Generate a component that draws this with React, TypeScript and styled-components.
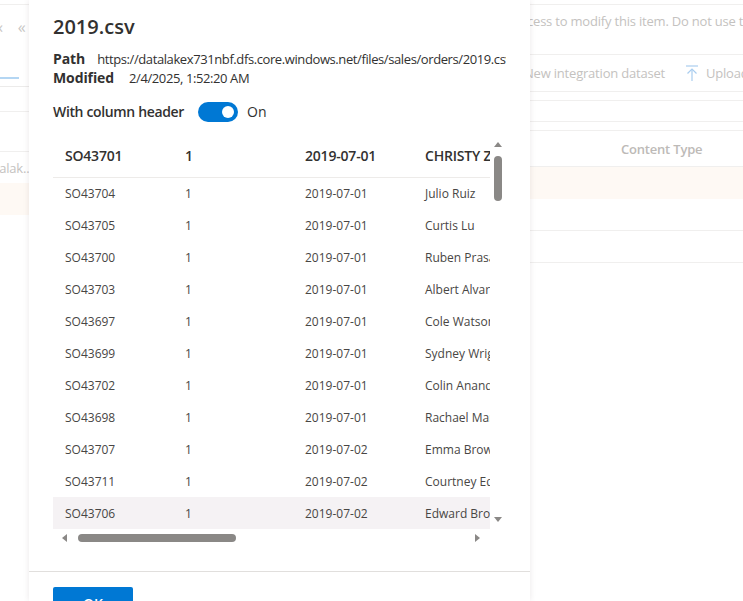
import React from 'react';
import styled, { createGlobalStyle } from 'styled-components';

const GlobalStyle = createGlobalStyle`
  html, body {
    margin: 0;
    padding: 0;
    background: #ffffff;
  }
  body {
    font-family: 'Segoe UI', 'Open Sans', 'Noto Sans', sans-serif;
    color: #323130;
  }
`;

const Page = styled.div`
  position: relative;
  width: 743px;
  height: 601px;
  overflow: hidden;
  background: #ffffff;
`;

/* ---------- faded studio page behind the panel ---------- */

const Backdrop = styled.div`
  display: flex;
  height: 100%;
  color: #c4c2c0;
  font-size: 13px;
  letter-spacing: -0.2px;
`;

const LeftPane = styled.div`
  width: 120px;
  display: flex;
  flex-direction: column;
  flex-shrink: 0;
`;

const MainPane = styled.div`
  flex: 1;
  display: flex;
  flex-direction: column;
  padding-left: 407px;
`;

const Strip = styled.div<{ $h: number; $line?: boolean; $bg?: string; $top?: number }>`
  height: ${(p) => p.$h}px;
  padding-top: ${(p) => p.$top || 0}px;
  border-bottom: ${(p) => (p.$line ? '1px solid #f0efee' : 'none')};
  background: ${(p) => p.$bg || 'transparent'};
  display: flex;
  align-items: ${(p) => (p.$top ? 'flex-start' : 'center')};
  white-space: nowrap;
  overflow: hidden;
  flex-shrink: 0;
`;

const NavGlyphs = styled.div`
  display: flex;
  margin-left: -10px;
  font-size: 16px;
  color: #c8c6c4;
`;

const Glyph = styled.span`
  width: 21px;
  text-align: center;
`;

const TabStrip = styled.div`
  height: 37px;
  border-bottom: 1px solid #ecebea;
  display: flex;
  align-items: flex-end;
  flex-shrink: 0;
`;

const TabMark = styled.div`
  width: 19px;
  height: 2px;
  margin-bottom: 7px;
  background: #b4d6f3;
`;

const FadedText = styled.span<{ $shift?: number }>`
  color: #c4c2c0;
  margin-left: ${(p) => p.$shift || 0}px;
`;

const Toolbar = styled.div`
  display: flex;
  align-items: center;
  gap: 21px;
  margin-left: -3px;
`;

const ToolItem = styled.span`
  display: inline-flex;
  align-items: center;
  gap: 8px;
`;

const ColHead = styled.div`
  padding-left: 94px;
  font-weight: 600;
  color: #bdbab7;
`;

/* ---------- the side panel ---------- */

const Panel = styled.aside`
  position: absolute;
  top: 0;
  left: 29px;
  width: 501px;
  height: 601px;
  background: #ffffff;
  box-shadow: 0 0 6px rgba(60, 30, 40, 0.1);
  display: flex;
  flex-direction: column;
  overflow: hidden;
`;

const PanelBody = styled.div`
  padding: 13px 24px 0;
  display: flex;
  flex-direction: column;
`;

const Title = styled.h2`
  margin: 0;
  font-size: 20px;
  line-height: 28px;
  font-weight: 600;
  color: #323130;
`;

const MetaList = styled.div`
  margin-top: 8px;
  display: flex;
  flex-direction: column;
`;

const MetaRow = styled.div`
  height: 19px;
  display: flex;
  align-items: baseline;
  font-size: 13px;
  letter-spacing: -0.4px;
  line-height: 19px;
  white-space: nowrap;
  overflow: hidden;
`;

const MetaLabel = styled.span<{ $gap: number }>`
  font-size: 14px;
  letter-spacing: -0.1px;
  font-weight: 700;
  margin-right: ${(p) => p.$gap}px;
`;

const ToggleRow = styled.div`
  margin-top: 15px;
  height: 20px;
  display: flex;
  align-items: center;
  font-size: 14px;
  line-height: 20px;
`;

const ToggleLabel = styled.span`
  font-weight: 600;
  letter-spacing: -0.35px;
  margin-right: 14px;
`;

const Track = styled.span<{ $on: boolean }>`
  width: 40px;
  height: 20px;
  box-sizing: border-box;
  border-radius: 10px;
  background: ${(p) => (p.$on ? '#0078d4' : '#ffffff')};
  display: inline-flex;
  align-items: center;
  justify-content: ${(p) => (p.$on ? 'flex-end' : 'flex-start')};
  padding: 0 4px;
  margin-right: 9px;
`;

const Knob = styled.span`
  width: 12px;
  height: 12px;
  border-radius: 50%;
  background: #ffffff;
`;

const TableArea = styled.div`
  margin-top: 15px;
  display: grid;
  grid-template-columns: 437px 16px;
  grid-template-rows: 392px 18px;
`;

const Viewport = styled.div`
  overflow: hidden;
`;

const Grid = styled.table`
  border-collapse: collapse;
  table-layout: fixed;
  width: 480px;
`;

const HeadCell = styled.th`
  width: 120px;
  box-sizing: border-box;
  height: 40px;
  padding: 0 0 3px 12px;
  text-align: left;
  font-size: 14px;
  font-weight: 600;
  letter-spacing: -0.2px;
  color: #323130;
  border-bottom: 1px solid #edebe9;
  white-space: nowrap;
  overflow: hidden;
`;

const Row = styled.tr<{ $hover?: boolean }>`
  height: 32px;
  background: ${(p) => (p.$hover ? '#f5f2f4' : 'transparent')};
`;

const Cell = styled.td`
  padding: 0 0 0 12px;
  font-size: 12px;
  color: #484644;
  white-space: nowrap;
  overflow: hidden;
`;

const VScroll = styled.div`
  display: flex;
  flex-direction: column;
  align-items: center;
  padding: 4px 0 6px;
  box-sizing: border-box;
`;

const HScroll = styled.div`
  display: flex;
  align-items: center;
  padding: 0 9px 0 8px;
`;

const Thumb = styled.div<{ $vertical?: boolean }>`
  background: #8a8886;
  border-radius: 4px;
  ${(p) => (p.$vertical ? 'width: 8px; height: 45px; margin-top: 8px;' : 'height: 8px; width: 158px; margin-left: 10px;')}
`;

const Filler = styled.div`
  flex: 1;
`;

const Footer = styled.div`
  margin-top: 24px;
  border-top: 1px solid #e1dfdd;
  padding: 15px 24px;
`;

const PrimaryButton = styled.button`
  width: 80px;
  height: 32px;
  border: none;
  border-radius: 2px;
  background: #0078d4;
  color: #ffffff;
  font-family: inherit;
  font-size: 14px;
  font-weight: 600;
`;

const Arrow = ({ dir }: { dir: 'up' | 'down' | 'left' | 'right' }) => {
  const pts = {
    up: '0,6 4,1 8,6',
    down: '0,1 8,1 4,6',
    left: '6,0 6,8 1,4',
    right: '1,0 1,8 6,4',
  }[dir];
  const vertical = dir === 'up' || dir === 'down';
  return (
    <svg width={vertical ? 8 : 7} height={vertical ? 7 : 8} viewBox={vertical ? '0 0 8 7' : '0 0 7 8'}>
      <polygon points={pts} fill="#8a8886" />
    </svg>
  );
};

const UploadIcon = () => (
  <svg width="12" height="16" viewBox="0 0 12 16" fill="none" stroke="#a9cdef" strokeWidth="1.2">
    <line x1="0" y1="1" x2="12" y2="1" />
    <line x1="6" y1="4" x2="6" y2="16" />
    <polyline points="1.5,8.5 6,4 10.5,8.5" />
  </svg>
);

const rows: [string, string, string, string][] = [
  ['SO43704', '1', '2019-07-01', 'Julio Ruiz'],
  ['SO43705', '1', '2019-07-01', 'Curtis Lu'],
  ['SO43700', '1', '2019-07-01', 'Ruben Prasad'],
  ['SO43703', '1', '2019-07-01', 'Albert Alvarez'],
  ['SO43697', '1', '2019-07-01', 'Cole Watson'],
  ['SO43699', '1', '2019-07-01', 'Sydney Wright'],
  ['SO43702', '1', '2019-07-01', 'Colin Anand'],
  ['SO43698', '1', '2019-07-01', 'Rachael Martinez'],
  ['SO43707', '1', '2019-07-02', 'Emma Brown'],
  ['SO43711', '1', '2019-07-02', 'Courtney Edwards'],
  ['SO43706', '1', '2019-07-02', 'Edward Brown'],
];

const App: React.FC = () => {
  return (
    <Page>
      <GlobalStyle />
      <Backdrop>
        <LeftPane>
          <Strip $h={4} $line />
          <Strip $h={44}>
            <NavGlyphs>
              <Glyph>‹</Glyph>
              <Glyph>«</Glyph>
            </NavGlyphs>
          </Strip>
          <TabStrip>
            <TabMark />
          </TabStrip>
          <Strip $h={24} $line />
          <Strip $h={39} $line />
          <Strip $h={31}>
            <FadedText $shift={-20}>datalak...</FadedText>
          </Strip>
          <Strip $h={32} $bg="#fef9f4" />
        </LeftPane>
        <MainPane>
          <Strip $h={4} $line />
          <Strip $h={42} $top={7} $line>
            <FadedText>cess to modify this item. Do not use this</FadedText>
          </Strip>
          <Strip $h={36} $line>
            <Toolbar>
              <FadedText>New integration dataset</FadedText>
              <ToolItem>
                <UploadIcon />
                <FadedText>Upload</FadedText>
              </ToolItem>
            </Toolbar>
          </Strip>
          <Strip $h={8} $line />
          <Strip $h={20} $line />
          <Strip $h={8} $line />
          <Strip $h={35} $line>
            <ColHead>Content Type</ColHead>
          </Strip>
          <Strip $h={32} $bg="#fef9f4" />
          <Strip $h={31} $line />
          <Strip $h={31} $line />
        </MainPane>
      </Backdrop>

      <Panel>
        <PanelBody>
          <Title>2019.csv</Title>
          <MetaList>
            <MetaRow>
              <MetaLabel $gap={12}>Path</MetaLabel>
              https://datalakex731nbf.dfs.core.windows.net/files/sales/orders/2019.csv
            </MetaRow>
            <MetaRow>
              <MetaLabel $gap={15}>Modified</MetaLabel>
              2/4/2025, 1:52:20 AM
            </MetaRow>
          </MetaList>
          <ToggleRow>
            <ToggleLabel>With column header</ToggleLabel>
            <Track $on>
              <Knob />
            </Track>
            <span>On</span>
          </ToggleRow>
          <TableArea>
            <Viewport>
              <Grid>
                <thead>
                  <tr>
                    <HeadCell>SO43701</HeadCell>
                    <HeadCell>1</HeadCell>
                    <HeadCell>2019-07-01</HeadCell>
                    <HeadCell>CHRISTY ZHU</HeadCell>
                  </tr>
                </thead>
                <tbody>
                  {rows.map((r, i) => (
                    <Row key={r[0]} $hover={i === rows.length - 1}>
                      {r.map((c, j) => (
                        <Cell key={j}>{c}</Cell>
                      ))}
                    </Row>
                  ))}
                </tbody>
              </Grid>
            </Viewport>
            <VScroll>
              <Arrow dir="up" />
              <Thumb $vertical />
              <Filler />
              <Arrow dir="down" />
            </VScroll>
            <HScroll>
              <Arrow dir="left" />
              <Thumb />
              <Filler />
              <Arrow dir="right" />
            </HScroll>
            <div />
          </TableArea>
        </PanelBody>
        <Footer>
          <PrimaryButton>OK</PrimaryButton>
        </Footer>
      </Panel>
    </Page>
  );
};

export default App;
